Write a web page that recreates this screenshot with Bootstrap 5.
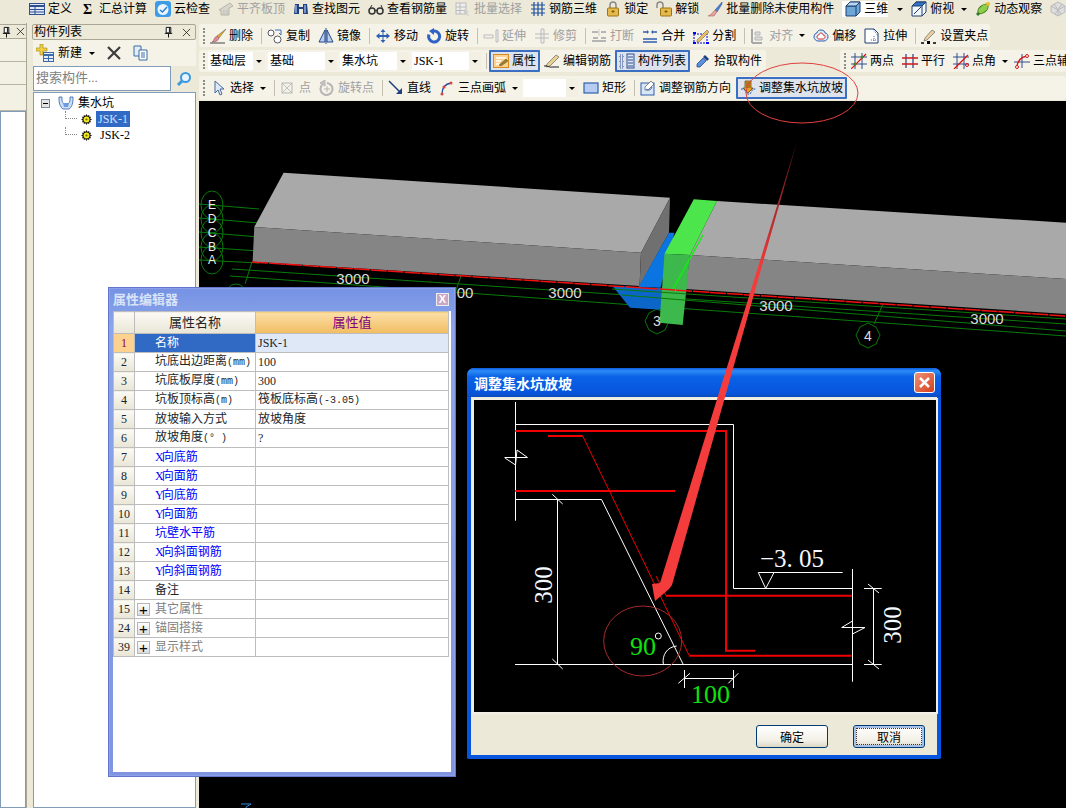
<!DOCTYPE html>
<html lang="zh-CN">
<head>
<meta charset="UTF-8">
<title>调整集水坑放坡</title>
<link href="https://cdn.jsdelivr.net/npm/bootstrap@5.3.0/dist/css/bootstrap.min.css" rel="stylesheet">
<style>
  html, body { margin: 0; background: #ece9d8; }
  body { font: 12px/16px "Liberation Serif", "Noto Sans CJK SC", serif; color: #000; }
  .app { width: 1066px; height: 808px; overflow: hidden; position: relative; background: #ece9d8; }

  .ic { width: 16px; height: 16px; flex: none; display: block; }
  .tool { display: flex; align-items: center; gap: 3px; white-space: nowrap; flex: none; }
  .tool.off { color: #a0a0a0; }
  .tool.on { background: #dfe4ec; border: 2px solid #3a6fc4; border-radius: 1px; height: 22px; padding: 0 2px; }
  .drop { width: 0; height: 0; flex: none; border: 3px solid transparent; border-top: 3px solid #000; border-bottom: 0; margin-left: 3px; }
  .grip { width: 2px; height: 16px; flex: none; border-left: 2px dotted #8f8c80; }
  .vsep { width: 1px; height: 16px; flex: none; background: #c4c1b3; margin-right: -3px; }

  .topbar { height: 23px; flex: none; gap: 8px; padding: 1px 0 0 29px; }
  .viewcombo { padding-left: 3px; }
  .viewdrop { margin-left: 6px; }
  .viewdrop2 { margin-left: 4px; }
  .cols { min-height: 0; }
  .bar { background: #f5f2e8; border-radius: 3px; gap: 8px; padding-left: 4px; flex: none; overflow: hidden; }
  .bar-a { height: 23px; margin-top: 1px; width: 791px; }
  .bar-a .grip, .bar-aux .grip { margin-right: -3px; }
  .row-b { margin-top: 3px; flex: none; }
  .bar-b { height: 22px; width: 567px; gap: 3px; }
  .bar-aux { height: 22px; margin-left: 74px; width: 226px; }
  .sep-b { margin: 0 -1px 0 2px; }
  .nudge-1 { margin-left: 1px; }
  .nudge-2 { margin-left: 2px; }
  .pull-2 { margin-left: -2px; }
  .pull-3 { margin-left: -3px; }
  .bar-c { height: 24px; margin-top: 4px; }
  .bar-c .grip { margin-right: -2px; }
  .combo { display: flex; height: 18px; background: #fff; align-items: center; padding-left: 2px; flex: none; }
  .combo > span { flex: 1; white-space: nowrap; }
  .combo > i { width: 12px; height: 18px; background: #f3f0e3; display: flex; align-items: center; justify-content: center; }
  .combo > i .drop { margin-left: 0; }

  .stub { width: 27px; flex: none; border-right: 1px solid #a9a695; }
  .stub-title { height: 15px; margin-top: 1px; border-top: 1px solid #a9a695; border-bottom: 1px solid #a9a695; gap: 4px; padding-left: 1px; flex: none; }
  .stub-row { height: 23px; border-bottom: 1px solid #b8b5a5; background: #f3f0e4; flex: none; }
  .stub-row-tall { height: 26px; }
  .stub-body { background: #fff; border: 1px solid #7f9db9; }

  .listpanel { width: 164px; margin-left: 5px; flex: none; }
  .list-title { height: 16px; margin-top: 1px; border: 1px solid #a9a695; border-radius: 2px; line-height: 14px; font-size: 12px; padding-left: 1px; flex: none; }
  .list-title b { font-weight: 400; font-size: 12px; flex: 1; }
  .list-tools { height: 26px; background: #f5f2e8; margin-left: 1px; padding-left: 3px; gap: 4px; flex: none; }
  .search-row { height: 25px; margin-left: 1px; flex: none; }
  .search-box { width: 138px; border: 1px solid #7f9db9; background: #fff; color: #808080; padding-left: 2px; line-height: 21px; font-size: 13px; }
  .tree { background: #fff; border: 1px solid #7f9db9; margin-left: 1px; margin-top: 1px; padding: 2px 0 0 7px; position: relative; }
  .tree-row { height: 16px; display: flex; align-items: center; }
  .tree-sel { background: #316ac5; color: #cfe0ff; padding: 0 2px; }
  .tree-link { width: 12px; height: 8px; margin: 0 0 8px 24px; border-left: 1px dotted #888; border-bottom: 1px dotted #888; flex: none; }

  .work { width: 867px; margin-left: 3px; flex: none; min-height: 0; }
  .cad { background: #000; margin-top: 1px; min-height: 0; overflow: hidden; }
  .cad svg { display: block; }

  .propwin { position: absolute; left: 108px; top: 287px; width: 348px; height: 490px; background: linear-gradient(#7592e4, #8ba5ea 8%, #7f95e0); border: 1px solid #6276cc; padding: 0 4px 4px; box-shadow: inset 0 0 0 1px #8c9fe8; }
  .prop-head { height: 23px; color: #d9e3f7; font-weight: 700; font-size: 13px; }
  .prop-x { width: 13px; height: 13px; background: #c9a6c4; border: 1px solid #eee; color: #fff; font: 700 11px/11px "Liberation Sans", sans-serif; text-align: center; margin-right: 2px; }
  .prop-body { background: #fff; height: 461px; }
  .prop-table { width: 336px; table-layout: fixed; --bs-table-border-color: #bdbdbd; --bs-table-bg: transparent; font-size: 12px; }
  .prop-table td, .prop-table th { padding: 0; height: 19px; line-height: 17px; font-weight: 400; white-space: nowrap; overflow: hidden; vertical-align: middle; }
  .prop-table thead th { height: 22px; text-align: center; font-size: 13px; background: linear-gradient(#fbfaf4, #e9e6d6); }
  .prop-table thead th.val-head { background: linear-gradient(#fbdfa6, #f1bd62); color: #800080; }
  .rownum { background: linear-gradient(#fbfaf4, #e9e6d6) !important; text-align: center; }
  .rownum-on { background: #fdd28f !important; color: #8a0050; }
  .lbl { padding-left: 20px !important; }
  .lbl-blue { color: #0000ff; }
  .lbl-grey { color: #808080; }
  .lbl-on { background: #316ac5 !important; color: #fff; }
  .val-on { background: #dfe8f6 !important; }
  .val { padding-left: 2px !important; }
  .half { font-family: "Liberation Mono", monospace; font-size: 10px; }
  .axis { letter-spacing: -2px; }
  .plus { display: inline-block; width: 13px; height: 13px; margin: 0 5px 0 2px; border: 1px solid #b5b5b5; background: linear-gradient(#fff, #dcdcdc); color: #000; text-align: center; font: 15px/11px "Liberation Sans", sans-serif; vertical-align: -2px; }

  .xpdlg { position: absolute; left: 467px; top: 368px; width: 474px; height: 391px; background: #ece9d8; border: 4px solid #0855dd; border-top: 0; border-radius: 7px 7px 2px 2px; }
  .xp-head { height: 29px; margin: 0 -4px; padding: 0 6px 0 7px; border-radius: 7px 7px 0 0; background: linear-gradient(#0b5ce0, #2c8cf6 10%, #0a62e6 30%, #0855dd 85%, #0a4cc0); color: #fff; font: 700 14px/20px "Noto Sans CJK SC", sans-serif; flex: none; }
  .xp-close { width: 21px; height: 21px; border: 1px solid #fff; border-radius: 3px; background: linear-gradient(135deg, #ee9277, #d6401c); }
  .xp-pic { background: #000; border: 2px solid #f2f0e6; height: 316px; margin: 1px 0 0 1px; width: 466px; flex: none; }
  .xp-pic svg { display: block; }
  .xp-foot { height: 42px; padding: 11px 12px 0 0; gap: 25px; }
  .xp-btn { --bs-btn-padding-y: 0; --bs-btn-padding-x: 0; --bs-btn-font-size: 12px; --bs-btn-line-height: 20px; --bs-btn-border-color: #003c74; --bs-btn-border-radius: 3px; width: 72px; height: 23px; background: linear-gradient(#fff, #f2f0e6 70%, #dcd8c6); color: #000; font-family: "Noto Sans CJK SC", sans-serif; }
  .xp-btn.focus-btn { box-shadow: inset 0 0 0 2px #a6c0ea; outline: 1px dotted #333; outline-offset: -4px; }

  .markup { position: absolute; left: 0; top: 0; pointer-events: none; }
</style>
</head>
<body>

<svg width="0" height="0" class="position-absolute">
  <defs>
    <symbol id="i-def" viewBox="0 0 16 16"><rect x=".5" y="2.500" width="15" height="11" fill="#dfe9f8" stroke="#2f4f8f"/><path d="M1 5h14" stroke="#2f4f8f" stroke-width="2"/><path d="M1 8.500h14M1 11h14M6 6v7" stroke="#2f4f8f"/></symbol>
    <symbol id="i-cloud" viewBox="0 0 16 16"><rect width="16" height="16" rx="3" fill="#3d9be8"/><circle cx="8" cy="8.500" r="5.500" fill="#eaf5ff"/><path d="M5 9l2.500 2L12 6" fill="none" stroke="#2a7fd0" stroke-width="1.500"/></symbol>
    <symbol id="i-level" viewBox="0 0 16 16"><path d="M1 9l11-7 3 3-4 2v7H3V9z" fill="#d8d6cc" stroke="#b8b6aa"/><path d="M6 9v5M9 9v5" stroke="#bbb"/></symbol>
    <symbol id="i-bino" viewBox="0 0 16 16"><path d="M2 3h4v3h4V3h4l1 10h-5V8H6v5H1z" fill="#23407e"/><path d="M3 4v8M12 4v8" stroke="#8fb0e8" stroke-width="1.500"/></symbol>
    <symbol id="i-glass" viewBox="0 0 16 16"><circle cx="4" cy="10" r="3" fill="none" stroke="#333" stroke-width="1.500"/><circle cx="12" cy="10" r="3" fill="none" stroke="#333" stroke-width="1.500"/><path d="M7 9.500h2M1 9l3-5M15 9l-2-5" stroke="#333"/></symbol>
    <symbol id="i-batch" viewBox="0 0 16 16"><rect x="1" y="2" width="10" height="11" fill="#eee" stroke="#bbb"/><path d="M1 6h10M1 9.500h10M5 2v11" stroke="#bbb"/><path d="M9 8l5 3-2 1 2 3-1 .500-2-3-2 1z" fill="#ccc"/></symbol>
    <symbol id="i-grid" viewBox="0 0 16 16"><path d="M1 4h14M1 8h14M1 12h14M4 1v14M8 1v14M12 1v14" stroke="#1f4f9f" stroke-width="1.200" fill="none"/></symbol>
    <symbol id="i-lock" viewBox="0 0 16 16"><path d="M5 7V4a3 3 0 0 1 6 0v3" fill="none" stroke="#8a8a8a" stroke-width="1.500"/><rect x="2.500" y="7" width="11" height="8" rx="1" fill="#e6b94a" stroke="#9a7416"/><path d="M8 9v3M6.500 10.500h3" stroke="#7a5a10"/></symbol>
    <symbol id="i-unlock" viewBox="0 0 16 16"><path d="M1 7V4a3 3 0 0 1 6 0v3" fill="none" stroke="#8a8a8a" stroke-width="1.500"/><rect x="4.500" y="7" width="11" height="8" rx="1" fill="#e6b94a" stroke="#9a7416"/><path d="M10 9v3M8.500 10.500h3" stroke="#7a5a10"/></symbol>
    <symbol id="i-brush" viewBox="0 0 16 16"><path d="M15 1L8 9l2 2 5-8z" fill="#4a7fd0" stroke="#2a4f90" stroke-width=".5"/><path d="M8 9l2 2-3 4H1c3-1 4-3 7-6z" fill="#e7a0a0" stroke="#a05a5a" stroke-width=".5"/></symbol>
    <symbol id="i-cube" viewBox="0 0 16 16"><path d="M1 5l4-4h10v10l-4 4H1z" fill="#6ea6d8" stroke="#1f3f6f"/><path d="M1 5h10v10M11 5l4-4" fill="none" stroke="#1f3f6f"/><path d="M5 1h10l-4 4H1z" fill="#b9d6f0" stroke="#1f3f6f"/></symbol>
    <symbol id="i-top" viewBox="0 0 16 16"><path d="M1 5l4-4h10v10l-4 4H1z" fill="#f3f7fc" stroke="#1f3f6f"/><path d="M5 1h10l-4 4H1z" fill="#2f74c4" stroke="#1f3f6f"/><path d="M11 5v10M11 5l4-4M3 13l7-7" fill="none" stroke="#1f3f6f"/></symbol>
    <symbol id="i-orbit" viewBox="0 0 16 16"><path d="M2 14L13 3" stroke="#2f7f2f" stroke-width="3"/><ellipse cx="8" cy="8" rx="6" ry="3.500" transform="rotate(-40 8 8)" fill="#8fce4a" stroke="#3a7a1a"/><circle cx="13" cy="3" r="2" fill="#e8c020"/></symbol>
    <symbol id="i-cubeg" viewBox="0 0 16 16"><path d="M1 5l7-4 7 4v6l-7 4-7-4z" fill="#ddd" stroke="#bbb"/><path d="M1 5l7 4 7-4M8 9v6M4 3l7 10M12 3L5 13" fill="none" stroke="#bbb"/></symbol>
    <symbol id="i-del" viewBox="0 0 16 16"><path d="M16 1L7 8l2 2z" fill="#e8b020" stroke="#555" stroke-width=".5"/><path d="M7 8l2 2c-1 3-3 4-7 4 2-1 2-5 5-6z" fill="#e08a9a" stroke="#7a4a5a" stroke-width=".5"/><path d="M0 15h15" stroke="#444"/></symbol>
    <symbol id="i-copy" viewBox="0 0 16 16"><circle cx="4" cy="5" r="3" fill="#fff" stroke="#556"/><circle cx="10.500" cy="11.500" r="3.500" fill="#fff" stroke="#556"/><path d="M8 2h6v5M14 7l-2-2" fill="none" stroke="#3a6fc4"/></symbol>
    <symbol id="i-mirror" viewBox="0 0 16 16"><path d="M7 2L1 14h6zM9 2l6 12H9z" fill="#b9d0f0" stroke="#24458a"/><path d="M8 0v16" stroke="#24458a"/></symbol>
    <symbol id="i-move" viewBox="0 0 16 16"><path d="M8 1l2.500 3h-2v3h3V5L15 8l-3.500 3V9h-3v3h2L8 15l-2.500-3h2V9h-3v2L1 8l3.500-3v2h3V4h-2z" fill="#2f5faf"/></symbol>
    <symbol id="i-rot" viewBox="0 0 16 16"><path d="M8 3a5.500 5.500 0 1 1-5 3.500" fill="none" stroke="#2f62c4" stroke-width="3"/><path d="M8 0v7L3 3z" fill="#2f62c4"/></symbol>
    <symbol id="i-ext" viewBox="0 0 16 16"><path d="M1 7h9M1 10h9M1 7v3M10 7v3" stroke="#bbb" fill="none"/><path d="M13 2h2v12h-2z" fill="#eee" stroke="#bbb"/></symbol>
    <symbol id="i-trim" viewBox="0 0 16 16"><path d="M1 6h14M1 10h14M7 1h3v14H7z" fill="#eee" stroke="#bbb"/></symbol>
    <symbol id="i-break" viewBox="0 0 16 16"><path d="M1 4h6M10 4h5M2 10h5M10 10h5M1 13h14" stroke="#b5b5b5" stroke-width="2"/><path d="M8 1v7" stroke="#c8c8c8"/></symbol>
    <symbol id="i-merge" viewBox="0 0 16 16"><path d="M1 4h5M10 4h5M1 11h14M1 14h14" stroke="#2f5faf" stroke-width="1.500"/><path d="M7 4l-2-2v4zM9 4l2-2v4z" fill="#2f5faf"/></symbol>
    <symbol id="i-split" viewBox="0 0 16 16"><rect x="1" y="6" width="13" height="9" fill="none" stroke="#0000e0" stroke-dasharray="2 1"/><path d="M4 12L14 2l2 2L6 14H4z" fill="#e8c060" stroke="#555" stroke-width=".5"/><path d="M0 5h3M0 15h3M13 15h3" stroke="#00f" stroke-width="2"/></symbol>
    <symbol id="i-align" viewBox="0 0 16 16"><path d="M2 1v14M2 15h10" stroke="#a8a8a8" stroke-width="2"/><path d="M5 4h5v3H5zM5 9h7v3H5z" fill="#ddd" stroke="#b5b5b5"/></symbol>
    <symbol id="i-offset" viewBox="0 0 16 16"><path d="M8 2c3 0 4 2 4 3 2 0 3 2 3 4s-2 4-4 4H5c-2 0-4-2-4-4 0-3 2-4 3-4 0-2 2-3 4-3z" fill="#dcecf8" stroke="#2f5faf"/><path d="M8 5c2 0 2 2 2 2 2 0 2 1 2 2s-1 2-2 2H6c-1 0-2-1-2-2 0-2 2-2 2-2 0-1 1-2 2-2z" fill="#fff" stroke="#d03030"/></symbol>
    <symbol id="i-stretch" viewBox="0 0 16 16"><path d="M1 1h9l4 4v10H1z" fill="#fff" stroke="#1f3f6f"/><path d="M9 1l5 7M10 8v6M7 12h6" stroke="#3a6fc4" stroke-dasharray="1 1" fill="none"/></symbol>
    <symbol id="i-grips" viewBox="0 0 16 16"><path d="M4 10l7-8 3 2-8 8-3 1z" fill="#e8d0a0" stroke="#555" stroke-width=".6"/><path d="M0 15h3M6 15h3M12 15h3" stroke="#000" stroke-width="1.500"/><path d="M6 13h3v3H6z" fill="#000"/></symbol>
    <symbol id="i-props" viewBox="0 0 16 16"><rect x=".5" y="1.500" width="15" height="13" fill="#fdd28f" stroke="#d88a20"/><path d="M3 5h10M3 8h5M3 11h4" stroke="#fff" stroke-width="1.500"/><path d="M6 12l7-6 2 2-7 5z" fill="#a08020" stroke="#554" stroke-width=".5"/></symbol>
    <symbol id="i-rebar" viewBox="0 0 16 16"><path d="M3 11l9-9 3 2-9 9-4 1z" fill="#e8d090" stroke="#555" stroke-width=".6"/><path d="M0 13c3-1 5 2 9 1h6" fill="none" stroke="#222"/></symbol>
    <symbol id="i-list" viewBox="0 0 16 16"><rect x="8" y="1" width="7" height="14" fill="#dbe6f6" stroke="#2f4f8f"/><path d="M9 4h5M9 7h5M9 10h5M9 13h5" stroke="#2f4f8f"/><path d="M1 2h3v3H1zM1 7h3v3H1zM1 12h3v3H1z" fill="none" stroke="#2f4f8f" stroke-dasharray="1 1"/></symbol>
    <symbol id="i-pick" viewBox="0 0 16 16"><path d="M10 2l4 4-2 2-4-4z" fill="#1f3f7f"/><path d="M8 5l3 3-6 6H2v-3z" fill="#5a90e0" stroke="#1f3f7f" stroke-width=".7"/></symbol>
    <symbol id="i-two" viewBox="0 0 16 16"><path d="M4 0v16M11 0v16M0 4h16M0 11h16" stroke="#2f4f8f"/><path d="M0 16L15 1" stroke="#e01010" stroke-width="1.200"/><circle cx="4" cy="11" r="1.500" fill="#3a8a2a"/><circle cx="11" cy="4" r="1.500" fill="#3a8a2a"/></symbol>
    <symbol id="i-par" viewBox="0 0 16 16"><path d="M4 1v14M11 1v14" stroke="#2f4f8f" stroke-width="1.300"/><path d="M0 5h16M0 11h16" stroke="#d01818" stroke-width="1.300"/></symbol>
    <symbol id="i-ang" viewBox="0 0 16 16"><path d="M4 0v16M11 0v16M0 4h16M0 11h16" stroke="#2f4f8f"/><path d="M1 16L15 2" stroke="#e01010" stroke-width="1.300"/><circle cx="14" cy="12" r="1.500" fill="none" stroke="#e01010"/></symbol>
    <symbol id="i-aux" viewBox="0 0 16 16"><path d="M0 9h16M8 1v14" stroke="#2f4f8f"/><path d="M3 15C3 8 7 4 13 3" fill="none" stroke="#d01818" stroke-width="1.300"/><circle cx="3" cy="14" r="1.500" fill="#fff" stroke="#d01818"/><circle cx="13" cy="3" r="1.500" fill="#fff" stroke="#d01818"/></symbol>
    <symbol id="i-sel" viewBox="0 0 16 16"><path d="M4 1v12l3-3 2 5 2-1-2-5h4z" fill="#dfeaf8" stroke="#4a6a9a"/></symbol>
    <symbol id="i-pt" viewBox="0 0 16 16"><rect x="2" y="3" width="10" height="10" fill="none" stroke="#b5b5b5"/><path d="M2 3l10 10M12 3L2 13" stroke="#c0c0c0"/></symbol>
    <symbol id="i-rotpt" viewBox="0 0 16 16"><path d="M3 5a6 6 0 1 0 5-2" fill="none" stroke="#b5b5b5" stroke-width="2"/><path d="M6 0v6L1 3zM8 6v6M5 9h6" fill="#c4c4c4" stroke="#b5b5b5"/></symbol>
    <symbol id="i-line" viewBox="0 0 16 16"><path d="M1 1l12 12" stroke="#1f3f7f" stroke-width="1.500"/><path d="M14 14H8l6-6z" fill="#1f3f7f"/></symbol>
    <symbol id="i-arc" viewBox="0 0 16 16"><path d="M3 14C3 8 6 4 12 3" fill="none" stroke="#23509f" stroke-width="1.300"/><circle cx="3" cy="14" r="1.500" fill="#e04040"/><circle cx="5" cy="7" r="1.500" fill="#e04040"/><circle cx="12" cy="3" r="1.500" fill="#e04040"/></symbol>
    <symbol id="i-rect" viewBox="0 0 16 16"><rect x="1" y="3" width="14" height="10" fill="#b6ccf0" stroke="#2f5faf" stroke-width="1.200"/></symbol>
    <symbol id="i-adj" viewBox="0 0 16 16"><rect x="1" y="3" width="13" height="12" fill="#d9e6f6" stroke="#2f5faf"/><path d="M5 7l6-6 3 3-6 6H5z" fill="#fff" stroke="#555" stroke-width=".7"/><path d="M6 9c2 2 5 1 6-2" fill="none" stroke="#2f5faf"/></symbol>
    <symbol id="i-pit" viewBox="0 0 16 16"><path d="M1 9h3l3 5h3l3-5h3" fill="none" stroke="#2f5faf" stroke-dasharray="2 1"/><path d="M5 1h6v7h2l-5 5-5-5h2z" fill="#e8a020" stroke="#5a3a10" stroke-width=".7"/><path d="M7 2v6M9 2v6" stroke="#7a4a10"/></symbol>
    <symbol id="i-new" viewBox="0 0 18 18"><path d="M4 0h3v4h4v3H7v4H4V7H0V4h4z" fill="#f0d040" stroke="#a08020" stroke-width=".6"/><rect x="7.500" y="8.500" width="10" height="9" fill="#e4edf9" stroke="#3a6aa8"/><path d="M8 11h9" stroke="#3a6aa8" stroke-width="2"/><path d="M8 14.500h9M12.500 11v7" stroke="#3a6aa8"/></symbol>
    <symbol id="i-x" viewBox="0 0 14 14"><path d="M1 1l12 12M13 1L1 13" stroke="#3c3c3c" stroke-width="2.200"/></symbol>
    <symbol id="i-docs" viewBox="0 0 16 16"><path d="M1 1h7v10H1z" fill="#e4edf9" stroke="#3a6aa8"/><path d="M6 5h8v10H6z" fill="#fff" stroke="#3a6aa8"/><path d="M8 8h4M8 10h4M8 12h4" stroke="#3a6aa8"/></symbol>
    <symbol id="i-find" viewBox="0 0 16 16"><circle cx="9.500" cy="6.500" r="4.500" fill="#eaf5ff" stroke="#3a9ae0" stroke-width="2"/><path d="M6 10l-4 4" stroke="#3a9ae0" stroke-width="3"/></symbol>
    <symbol id="i-pitnode" viewBox="0 0 16 16"><path d="M1 2h3v3c0 2 1 3 2 4h4c1-1 2-2 2-4V2h3v3c0 4-2 8-4 9H5C3 13 1 9 1 5z" fill="#cfe0f6" stroke="#2f5faf" stroke-width=".8"/><path d="M5 8h6l-1 4H6z" fill="#6f9ade"/></symbol>
    <symbol id="i-gear" viewBox="0 0 12 12"><path d="M6 0l1 2 2-1 0 2 2 0-1 2 2 1-2 1 1 2-2 0 0 2-2-1-1 2-1-2-2 1 0-2-2 0 1-2-2-1 2-1-1-2 2 0 0-2 2 1z" fill="#151515"/><circle cx="6" cy="6" r="3.200" fill="#f4ea18"/><circle cx="6" cy="6" r="1.200" fill="#6a6a20"/></symbol>
    <symbol id="i-pin" viewBox="0 0 12 12"><path d="M3.500 1h5v6h-5zM2 7.500h8M6 8v4" fill="#fff" stroke="#000"/><path d="M7 1.500v5" stroke="#000"/></symbol>
    <symbol id="i-close" viewBox="0 0 10 10"><path d="M1 1l8 8M9 1L1 9" stroke="#222" stroke-width=".9"/></symbol>
  </defs>
</svg>

<div class="app d-flex flex-column">

  <div class="topbar d-flex align-items-start">
    <div class="tool"><svg class="ic"><use href="#i-def"/></svg>定义</div>
    <div class="tool"><svg class="ic"><text x="3" y="13" font-size="14" font-weight="700" font-family="Liberation Serif">Σ</text></svg>汇总计算</div>
    <div class="tool"><svg class="ic"><use href="#i-cloud"/></svg>云检查</div>
    <div class="tool off"><svg class="ic"><use href="#i-level"/></svg>平齐板顶</div>
    <div class="tool"><svg class="ic"><use href="#i-bino"/></svg>查找图元</div>
    <div class="tool"><svg class="ic"><use href="#i-glass"/></svg>查看钢筋量</div>
    <div class="tool off"><svg class="ic"><use href="#i-batch"/></svg>批量选择</div>
    <div class="tool"><svg class="ic"><use href="#i-grid"/></svg>钢筋三维</div>
    <div class="tool"><svg class="ic"><use href="#i-lock"/></svg>锁定</div>
    <div class="tool"><svg class="ic"><use href="#i-unlock"/></svg>解锁</div>
    <div class="tool"><svg class="ic"><use href="#i-brush"/></svg>批量删除未使用构件</div>
    <div class="tool"><div class="tool bg-white viewcombo"><svg class="ic"><use href="#i-cube"/></svg>三维</div><span class="drop viewdrop"></span></div>
    <div class="tool"><svg class="ic"><use href="#i-top"/></svg>俯视<span class="drop viewdrop2"></span></div>
    <div class="tool"><svg class="ic"><use href="#i-orbit"/></svg>动态观察</div>
    <svg class="ic"><use href="#i-cubeg"/></svg>
  </div>

  <div class="d-flex flex-grow-1 cols">
    <div class="stub d-flex flex-column">
      <div class="stub-title d-flex align-items-center"><svg width="11" height="12"><use href="#i-pin"/></svg><svg width="9" height="9"><use href="#i-close"/></svg></div>
      <div class="stub-row"></div>
      <div class="stub-row"></div>
      <div class="stub-row stub-row-tall"></div>
      <div class="stub-body flex-grow-1"></div>
    </div>

    <div class="listpanel d-flex flex-column">
      <div class="list-title d-flex align-items-center"><b>构件列表</b><svg width="11" height="12" class="me-2"><use href="#i-pin"/></svg><svg width="9" height="9" class="me-1"><use href="#i-close"/></svg></div>
      <div class="list-tools d-flex align-items-center">
        <svg width="18" height="18"><use href="#i-new"/></svg><span>新建</span><span class="drop"></span>
        <svg width="14" height="14" class="ms-2"><use href="#i-x"/></svg>
        <svg class="ic ms-2"><use href="#i-docs"/></svg>
      </div>
      <div class="search-row d-flex">
        <div class="search-box">搜索构件...</div>
        <div class="flex-grow-1 d-flex align-items-center justify-content-center"><svg class="ic"><use href="#i-find"/></svg></div>
      </div>
      <div class="tree flex-grow-1">
        <div class="tree-row"><svg width="9" height="9" class="me-2"><rect x=".5" y=".5" width="8" height="8" fill="#e4e4e4" stroke="#7a8a9a"/><path d="M2 4.500h5" stroke="#000"/></svg><svg class="ic me-1"><use href="#i-pitnode"/></svg><span>集水坑</span></div>
        <div class="tree-row"><span class="tree-link"></span><svg width="11" height="11" class="mx-1 flex-shrink-0"><use href="#i-gear"/></svg><span class="tree-sel">JSK-1</span></div>
        <div class="tree-row"><span class="tree-link"></span><svg width="11" height="11" class="mx-1 flex-shrink-0"><use href="#i-gear"/></svg><span class="px-1">JSK-2</span></div>
      </div>
    </div>

    <div class="work d-flex flex-column">
      <div class="bar bar-a d-flex align-items-center">
        <span class="grip"></span>
        <div class="tool"><svg class="ic"><use href="#i-del"/></svg>删除</div><span class="vsep"></span>
        <div class="tool"><svg class="ic"><use href="#i-copy"/></svg>复制</div>
        <div class="tool"><svg class="ic"><use href="#i-mirror"/></svg>镜像</div><span class="vsep"></span>
        <div class="tool"><svg class="ic"><use href="#i-move"/></svg>移动</div>
        <div class="tool"><svg class="ic"><use href="#i-rot"/></svg>旋转</div><span class="vsep"></span>
        <div class="tool off"><svg class="ic"><use href="#i-ext"/></svg>延伸</div>
        <div class="tool off"><svg class="ic"><use href="#i-trim"/></svg>修剪</div><span class="vsep"></span>
        <div class="tool off"><svg class="ic"><use href="#i-break"/></svg>打断</div>
        <div class="tool"><svg class="ic"><use href="#i-merge"/></svg>合并</div>
        <div class="tool"><svg class="ic"><use href="#i-split"/></svg>分割</div><span class="vsep"></span>
        <div class="tool off"><svg class="ic"><use href="#i-align"/></svg>对齐<span class="drop"></span></div>
        <div class="tool"><svg class="ic"><use href="#i-offset"/></svg>偏移</div>
        <div class="tool"><svg class="ic"><use href="#i-stretch"/></svg>拉伸</div><span class="vsep"></span>
        <div class="tool"><svg class="ic"><use href="#i-grips"/></svg>设置夹点</div>
      </div>

      <div class="d-flex row-b">
        <div class="bar bar-b d-flex align-items-center">
          <span class="grip"></span>
          <div class="combo" style="width:57px"><span>基础层</span><i><span class="drop"></span></i></div>
          <div class="combo" style="width:69px"><span>基础</span><i><span class="drop"></span></i></div>
          <div class="combo" style="width:69px"><span>集水坑</span><i><span class="drop"></span></i></div>
          <div class="combo" style="width:69px"><span>JSK-1</span><i><span class="drop"></span></i></div>
          <span class="vsep sep-b"></span>
          <div class="tool on"><svg class="ic"><use href="#i-props"/></svg>属性</div>
          <div class="tool nudge-1"><svg class="ic"><use href="#i-rebar"/></svg>编辑钢筋</div>
          <div class="tool on nudge-1"><svg class="ic"><use href="#i-list"/></svg>构件列表</div>
          <div class="tool nudge-2"><svg class="ic"><use href="#i-pick"/></svg>拾取构件</div>
        </div>
        <div class="bar bar-aux d-flex align-items-center">
          <span class="grip"></span>
          <div class="tool"><svg class="ic"><use href="#i-two"/></svg>两点</div>
          <div class="tool"><svg class="ic"><use href="#i-par"/></svg>平行</div>
          <div class="tool"><svg class="ic"><use href="#i-ang"/></svg>点角<span class="drop"></span></div>
          <div class="tool pull-2"><svg class="ic"><use href="#i-aux"/></svg>三点辅</div>
        </div>
      </div>

      <div class="bar bar-c d-flex align-items-center">
        <span class="grip"></span>
        <div class="tool"><svg class="ic"><use href="#i-sel"/></svg>选择<span class="drop"></span></div><span class="vsep"></span>
        <div class="tool off"><svg class="ic"><use href="#i-pt"/></svg>点</div>
        <div class="tool off"><svg class="ic"><use href="#i-rotpt"/></svg>旋转点</div><span class="vsep"></span>
        <div class="tool"><svg class="ic"><use href="#i-line"/></svg>直线</div>
        <div class="tool"><svg class="ic"><use href="#i-arc"/></svg>三点画弧<span class="drop"></span></div>
        <div class="combo pull-3" style="width:55px"><span></span><i><span class="drop"></span></i></div>
        <div class="tool pull-3"><svg class="ic"><use href="#i-rect"/></svg>矩形</div><span class="vsep"></span>
        <div class="tool"><svg class="ic"><use href="#i-adj"/></svg>调整钢筋方向</div>
        <div class="tool on pull-3"><svg class="ic"><use href="#i-pit"/></svg>调整集水坑放坡</div>
      </div>

      <div class="cad flex-grow-1">
        <svg width="867" height="708" viewBox="199 100 867 708" font-family="Liberation Sans, sans-serif">
          <g stroke="#0a7a0a" fill="none">
            <path d="M199 203l60 5M199 217l60 5M199 231l60 5M199 246l60 4M199 259l60 3"/>
            <path d="M232 268L1066 323M230 275L1066 335"/>
            <path d="M252 261l-7 22M461 275l-6 17M883 303l-9 20"/>
            <ellipse cx="212" cy="204" rx="11" ry="14"/><ellipse cx="212" cy="218" rx="11" ry="14"/><ellipse cx="212" cy="232" rx="11" ry="14"/><ellipse cx="212" cy="246" rx="11" ry="14"/><ellipse cx="212" cy="259" rx="11" ry="14"/>
            <ellipse cx="236" cy="296" rx="11" ry="13"/>
            <path d="M657 308l8 4 4 8-4 9-8 4-8-4-4-9 4-8z"/><path d="M868 322l8 4 4 8-4 9-8 4-8-4-4-9 4-8z"/>
          </g>
          <g fill="#efefef" font-size="12" text-anchor="middle">
            <text x="212" y="208">E</text><text x="212" y="222">D</text><text x="212" y="236">C</text><text x="212" y="250">B</text><text x="212" y="263">A</text>
          </g>
          <path d="M283.600 171.700L670 196.700 641 251.700 254.300 226z" fill="#a9a9a9"/>
          <path d="M254.300 226L641 251.700 639.600 285 252.600 260.700z" fill="#858585"/>
          <path d="M670 196.700L641 251.700 639.600 285 669 231.700z" fill="#707070"/>
          <path d="M717 200L1066 221.700V278L690 254z" fill="#a9a9a9"/>
          <path d="M690 254L1066 278V313L685.500 288z" fill="#858585"/>
          <path d="M669 231.700h5.400L660.600 286.700 638.500 286z" fill="#0a74e0"/>
          <path d="M612.500 285L680 288V310L630 306.700z" fill="#0c66c8"/>
          <path d="M693.800 198.300L717 200 690 254 664.500 252.700z" fill="#4ce64c"/>
          <path d="M664.500 252.700L690 254 682.700 324 659.500 321.700z" fill="#3cb84c"/>
          <path d="M703 234L673 288" stroke="#10f010" stroke-width="1.500"/>
          <path d="M252 261L1066 315" stroke="#f01010" stroke-width="1.500" stroke-dasharray="16 1"/>
          <path d="M612 288L1066 318M622 294L1066 330" stroke="#0a7a0a" fill="none"/>
          <g fill="#dcdcdc" font-size="15" text-anchor="middle">
            <text x="353" y="283">3000</text><text x="465" y="297">00</text><text x="565" y="297">3000</text><text x="776" y="310">3000</text><text x="987" y="323">3000</text>
            <text x="657" y="325" font-size="14">3</text><text x="868" y="340" font-size="14">4</text>
          </g>
          <path d="M241 803h10l-5 3v2" stroke="#2a8ae0" fill="none"/>
        </svg>
      </div>
    </div>
  </div>

  <div class="propwin d-flex flex-column">
    <div class="prop-head d-flex align-items-center justify-content-between flex-shrink-0"><span>属性编辑器</span><span class="prop-x">X</span></div>
    <div class="prop-body">
      <table class="table table-bordered mb-0 prop-table">
        <colgroup><col style="width:21px"><col style="width:121px"><col></colgroup>
        <thead><tr><th></th><th>属性名称</th><th class="val-head">属性值</th></tr></thead>
        <tbody>
          <tr><td class="rownum rownum-on">1</td><td class="lbl lbl-on">名称</td><td class="val val-on">JSK-1</td></tr>
          <tr><td class="rownum">2</td><td class="lbl">坑底出边距离<span class="half">(mm)</span></td><td class="val">100</td></tr>
          <tr><td class="rownum">3</td><td class="lbl">坑底板厚度<span class="half">(mm)</span></td><td class="val">300</td></tr>
          <tr><td class="rownum">4</td><td class="lbl">坑板顶标高<span class="half">(m)</span></td><td class="val">筏板底标高<span class="half">(-3.05)</span></td></tr>
          <tr><td class="rownum">5</td><td class="lbl">放坡输入方式</td><td class="val">放坡角度</td></tr>
          <tr><td class="rownum">6</td><td class="lbl">放坡角度<span class="half">(° )</span></td><td class="val">?</td></tr>
          <tr><td class="rownum">7</td><td class="lbl lbl-blue"><span class="axis">X</span>向底筋</td><td></td></tr>
          <tr><td class="rownum">8</td><td class="lbl lbl-blue"><span class="axis">X</span>向面筋</td><td></td></tr>
          <tr><td class="rownum">9</td><td class="lbl lbl-blue"><span class="axis">Y</span>向底筋</td><td></td></tr>
          <tr><td class="rownum">10</td><td class="lbl lbl-blue"><span class="axis">Y</span>向面筋</td><td></td></tr>
          <tr><td class="rownum">11</td><td class="lbl lbl-blue">坑壁水平筋</td><td></td></tr>
          <tr><td class="rownum">12</td><td class="lbl lbl-blue"><span class="axis">X</span>向斜面钢筋</td><td></td></tr>
          <tr><td class="rownum">13</td><td class="lbl lbl-blue"><span class="axis">Y</span>向斜面钢筋</td><td></td></tr>
          <tr><td class="rownum">14</td><td class="lbl">备注</td><td></td></tr>
          <tr><td class="rownum">15</td><td class="lbl-grey"><span class="plus">+</span>其它属性</td><td></td></tr>
          <tr><td class="rownum">24</td><td class="lbl-grey"><span class="plus">+</span>锚固搭接</td><td></td></tr>
          <tr><td class="rownum">39</td><td class="lbl-grey"><span class="plus">+</span>显示样式</td><td></td></tr>
        </tbody>
      </table>
    </div>
  </div>

  <div class="xpdlg d-flex flex-column">
    <div class="xp-head d-flex align-items-center justify-content-between">
      <span>调整集水坑放坡</span>
      <span class="xp-close d-flex align-items-center justify-content-center"><svg width="13" height="13"><path d="M2 2l9 9M11 2l-9 9" stroke="#fff" stroke-width="2.500"/></svg></span>
    </div>
    <div class="xp-pic">
      <svg width="462" height="312" viewBox="474 400 462 312" font-family="Liberation Serif, serif">
        <g fill="none" stroke="#fff" stroke-width="1">
          <path d="M515.500 402V520.700"/>
          <path d="M515.500 424.500H733.500V588.500H852.500"/>
          <path d="M515.500 499.500H601.500L683 664"/>
          <path d="M515 664.500H852.500M852.500 569V681.700"/>
          <path d="M504.500 457.500H527.500L517 450 515.500 465 505 458"/>
          <path d="M557.500 499V664M552.300 494.300L562.700 504M552.300 659L562.700 669"/>
          <path d="M758.300 572.500H842.700M758.300 572.500L765.700 588.500 774 572.500"/>
          <path d="M873.500 588V664M864 588.500H881.700M864 664.500H881.700M868 584L879 593M868 660L879 669"/>
          <path d="M841.700 627.500H865L852.500 634 852.500 621 841.700 627.500"/>
          <path d="M684.500 670V688M733.500 670V688M684.500 678.500H733.500M678.300 683.300L690 673.300M728.300 683.300L738.300 673.300"/>
          <path d="M663.300 664C662 655 667 647 676.700 646"/>
          <circle cx="658.300" cy="636" r="3"/>
        </g>
        <g fill="none" stroke="#f00000" stroke-width="2">
          <path d="M515.300 431H726V650.700H755"/>
          <path d="M548 436H582.700"/>
          <path d="M582.700 436L689.300 655.700" stroke-width="1"/>
          <path d="M689.300 655.700H851.700"/>
          <path d="M515.300 491H675"/>
          <path d="M666 595.700H851.700"/>
          <path d="M656 576L666 595.700" stroke-width="1"/>
        </g>
        <ellipse cx="642.700" cy="641" rx="39" ry="35" fill="none" stroke="#a52a2a"/>
        <g fill="#f4f8ff" font-size="25">
          <text x="0" y="0" transform="translate(552 585) rotate(-90)" text-anchor="middle">300</text>
          <text x="0" y="0" transform="translate(901 625) rotate(-90)" text-anchor="middle">300</text>
          <text x="760" y="567">−3. 05</text>
        </g>
        <g fill="#10e010" font-size="26">
          <text x="630" y="655">90</text>
          <text x="691" y="703">100</text>
        </g>
      </svg>
    </div>
    <div class="xp-foot d-flex justify-content-end">
      <button type="button" class="btn xp-btn">确定</button>
      <button type="button" class="btn xp-btn focus-btn">取消</button>
    </div>
  </div>

  <svg class="markup" width="1066" height="808" viewBox="0 0 1066 808">
    <defs>
      <linearGradient id="arrowFade" gradientUnits="userSpaceOnUse" x1="797" y1="140" x2="760" y2="270">
        <stop offset="0" stop-color="#5a1515"/><stop offset="1" stop-color="#f43c3c"/>
      </linearGradient>
    </defs>
    <ellipse cx="802" cy="93" rx="56" ry="30" fill="none" stroke="#e04040"/>
    <path d="M797.500 140L672 585 669 589 655 601 652 584 660 583z" fill="url(#arrowFade)"/>
  </svg>
</div>

<script src="https://cdn.jsdelivr.net/npm/bootstrap@5.3.0/dist/js/bootstrap.bundle.min.js"></script>
</body>
</html>
